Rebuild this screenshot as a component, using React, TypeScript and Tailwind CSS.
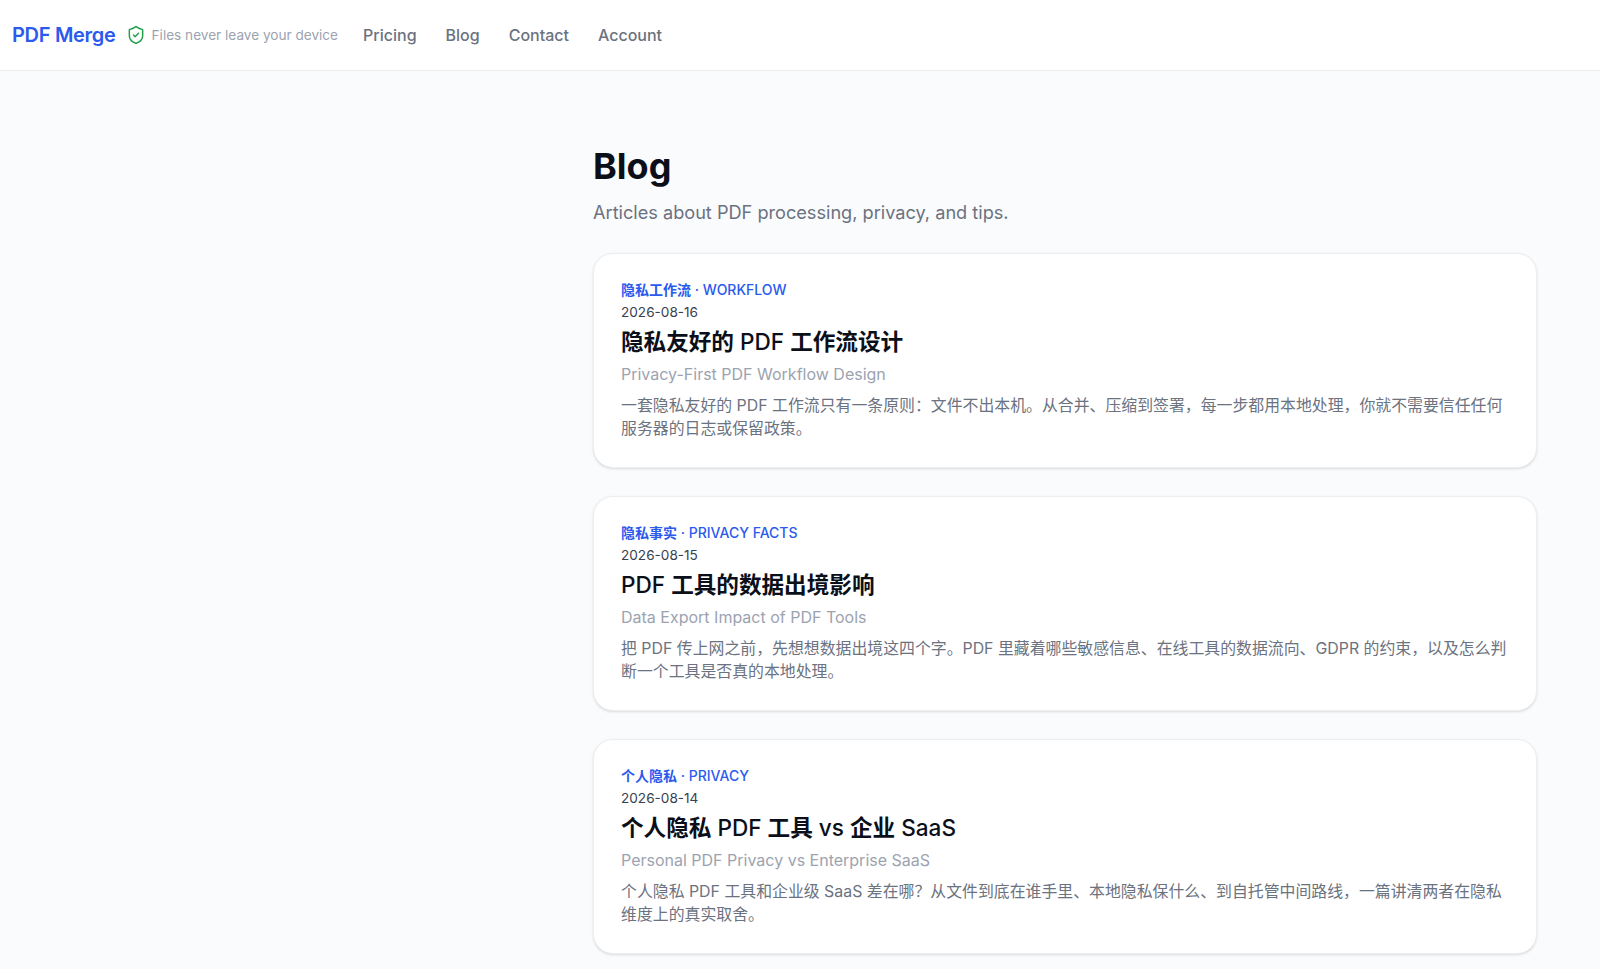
import { ShieldCheck } from "lucide-react";

const font = { fontFamily: 'Inter, "Noto Sans CJK SC", sans-serif' };

type Part = [string, boolean];

const posts: { label: Part[]; date: string; title: Part[]; sub: string; body: string }[] = [
  {
    label: [["隐私工作流", true], [" · WORKFLOW", false]],
    date: "2026-08-16",
    title: [["隐私友好的", true], [" PDF ", false], ["工作流设计", true]],
    sub: "Privacy-First PDF Workflow Design",
    body: "一套隐私友好的 PDF 工作流只有一条原则：文件不出本机。从合并、压缩到签署，每一步都用本地处理，你就不需要信任任何服务器的日志或保留政策。",
  },
  {
    label: [["隐私事实", true], [" · PRIVACY FACTS", false]],
    date: "2026-08-15",
    title: [["PDF ", false], ["工具的数据出境影响", true]],
    sub: "Data Export Impact of PDF Tools",
    body: "把 PDF 传上网之前，先想想数据出境这四个字。PDF 里藏着哪些敏感信息、在线工具的数据流向、GDPR 的约束，以及怎么判断一个工具是否真的本地处理。",
  },
  {
    label: [["个人隐私", true], [" · PRIVACY", false]],
    date: "2026-08-14",
    title: [["个人隐私", true], [" PDF ", false], ["工具", true], [" vs ", false], ["企业", true], [" SaaS", false]],
    sub: "Personal PDF Privacy vs Enterprise SaaS",
    body: "个人隐私 PDF 工具和企业级 SaaS 差在哪？从文件到底在谁手里、本地隐私保什么、到自托管中间路线，一篇讲清两者在隐私维度上的真实取舍。",
  },
];

export default function App() {
  return (
    <div style={font} className="h-[969px] overflow-hidden bg-[#fafbfc]">
      <header className="flex h-[71px] items-center border-b border-[#e9ebee] bg-white pl-3">
        <span className="text-[20px] font-semibold tracking-[-0.3px] text-[#2b5aed]">PDF Merge</span>
        <div className="ml-[10px] flex items-center gap-[6px] text-[13.6px] text-[#9ca3af]">
          <ShieldCheck className="h-5 w-5 text-[#22a24f]" strokeWidth={1.8} />
          <span>Files never leave your device</span>
        </div>
        <nav className="ml-[25px] flex items-center gap-[29px] text-[16px] font-medium text-[#6b7280]">
          <span>Pricing</span>
          <span>Blog</span>
          <span>Contact</span>
          <span>Account</span>
        </nav>
      </header>
      <main className="pl-[593px] pr-[63px] pt-[75px]">
        <h1 className="text-[36px] font-bold leading-10 text-[#0b0f19]">Blog</h1>
        <p className="mt-3 text-[18.15px] leading-7 text-[#6b7280]">Articles about PDF processing, privacy, and tips.</p>
        <div className="mt-[27px] flex flex-col gap-7">
          {posts.map((p) => (
            <article key={p.date} className="rounded-[20px] border border-[#eceef1] bg-white p-[27px] shadow-sm">
              <div className="text-[14px] font-semibold leading-[18px] text-[#2b5aed]">
                {p.label.map(([t, cjk], i) => (
                  <span key={i} className={cjk ? "font-bold" : "font-medium"}>{t}</span>
                ))}
              </div>
              <div className="mt-1 text-[13.6px] leading-[18px] text-[#374151]">{p.date}</div>
              <h2 className="mt-[5px] text-[22.6px] leading-8 text-[#0b0f19]">
                {p.title.map(([t, cjk], i) => (
                  <span key={i} className={cjk ? "font-bold" : "font-medium"}>{t}</span>
                ))}
              </h2>
              <div className="mt-1 text-[16px] leading-6 text-[#9ca3af]">{p.sub}</div>
              <p className="mt-2 text-[15.88px] leading-[23px] text-[#6b7280]">{p.body}</p>
            </article>
          ))}
        </div>
      </main>
    </div>
  );
}
